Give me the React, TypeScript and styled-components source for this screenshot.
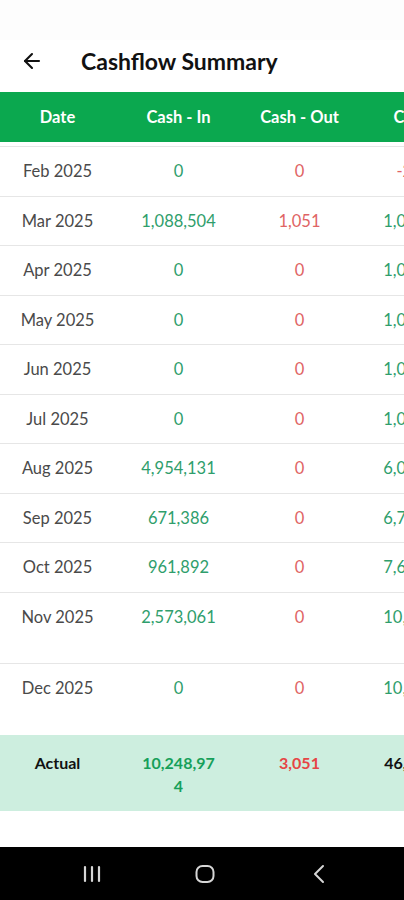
import React from "react";
import styled, { createGlobalStyle } from "styled-components";
import { ArrowLeft } from "lucide-react";

type Tone = "plain" | "in" | "out";

type Row = {
  date: string;
  cashIn: string;
  cashOut: string;
  closing: string;
  closingTone: Tone;
};

const rows: Row[] = [
  { date: "Feb 2025", cashIn: "0", cashOut: "0", closing: "-2,000", closingTone: "out" },
  { date: "Mar 2025", cashIn: "1,088,504", cashOut: "1,051", closing: "1,085,453", closingTone: "in" },
  { date: "Apr 2025", cashIn: "0", cashOut: "0", closing: "1,085,453", closingTone: "in" },
  { date: "May 2025", cashIn: "0", cashOut: "0", closing: "1,085,453", closingTone: "in" },
  { date: "Jun 2025", cashIn: "0", cashOut: "0", closing: "1,085,453", closingTone: "in" },
  { date: "Jul 2025", cashIn: "0", cashOut: "0", closing: "1,085,453", closingTone: "in" },
  { date: "Aug 2025", cashIn: "4,954,131", cashOut: "0", closing: "6,039,584", closingTone: "in" },
  { date: "Sep 2025", cashIn: "671,386", cashOut: "0", closing: "6,710,970", closingTone: "in" },
  { date: "Oct 2025", cashIn: "961,892", cashOut: "0", closing: "7,672,862", closingTone: "in" },
  { date: "Nov 2025", cashIn: "2,573,061", cashOut: "0", closing: "10,245,923", closingTone: "in" },
  { date: "Dec 2025", cashIn: "0", cashOut: "0", closing: "10,245,923", closingTone: "in" },
];

const GlobalStyle = createGlobalStyle`
  body {
    margin: 0;
    background: #ffffff;
    font-family: "Lato", "Noto Sans", sans-serif;
  }
`;

const Screen = styled.div`
  width: 404px;
  height: 900px;
  display: flex;
  flex-direction: column;
  background: #ffffff;
  overflow: hidden;
`;

const StatusBar = styled.div`
  height: 40px;
  background: #fdfdfd;
`;

const AppBar = styled.div`
  height: 52px;
  box-sizing: border-box;
  padding: 0 0 10px 20px;
  display: flex;
  align-items: center;
  gap: 37px;
  color: #111111;
`;

const Title = styled.h1`
  margin: 0;
  font-size: 23px;
  line-height: 26px;
  font-weight: 700;
`;

const TableArea = styled.div`
  flex: 1;
  overflow: hidden;
`;

const Table = styled.div`
  width: 484px;
  margin-left: -3px;
`;

const HeaderRow = styled.div`
  height: 50px;
  display: grid;
  grid-template-columns: repeat(4, 121px);
  align-items: center;
  background: #0ba84f;
  margin-bottom: 4px;
`;

const HeadCell = styled.div`
  text-align: center;
  color: #ffffff;
  font-size: 16.5px;
  font-weight: 700;
  white-space: nowrap;
`;

const Body = styled.div`
  border-top: 1px solid #e6e6e6;
`;

const DataRow = styled.div<{ $last?: boolean }>`
  display: grid;
  grid-template-columns: repeat(4, 121px);
  align-items: start;
  border-bottom: 1px solid ${({ $last }) => ($last ? "transparent" : "#e6e6e6")};
`;

const toneColor: Record<Tone, string> = {
  plain: "#4a4a4a",
  in: "#2f9e6c",
  out: "#e06464",
};

const Cell = styled.div<{ $tone: Tone }>`
  padding: 14px 21px 13px;
  line-height: 21.5px;
  text-align: center;
  font-size: 16.5px;
  color: ${({ $tone }) => toneColor[$tone]};
  overflow-wrap: anywhere;
`;

const TotalRow = styled.div`
  display: grid;
  grid-template-columns: repeat(4, 121px);
  align-items: start;
  background: #cdeedf;
  padding: 16px 0 14px;
`;

const totalColor: Record<Tone, string> = {
  plain: "#111111",
  in: "#16a05a",
  out: "#e64545",
};

const TotalCell = styled.div<{ $tone: Tone }>`
  padding: 0 21px;
  text-align: center;
  font-size: 16px;
  font-weight: 700;
  line-height: 23px;
  overflow-wrap: anywhere;
  color: ${({ $tone }) => totalColor[$tone]};
`;

const NavBar = styled.div`
  height: 53px;
  background: #000000;
  display: grid;
  grid-template-columns: repeat(3, 113.5px);
  justify-content: center;
  align-items: center;
  justify-items: center;
  padding-left: 6px;
`;

const NavIcon = styled.svg`
  display: block;
  color: #d6d6d6;
`;

export default function App() {
  return (
    <>
      <GlobalStyle />
      <Screen>
        <StatusBar />
        <AppBar>
          <ArrowLeft size={24} strokeWidth={2.1} />
          <Title>Cashflow Summary</Title>
        </AppBar>
        <TableArea>
          <Table>
            <HeaderRow>
              <HeadCell>Date</HeadCell>
              <HeadCell>Cash - In</HeadCell>
              <HeadCell>Cash - Out</HeadCell>
              <HeadCell>Closing</HeadCell>
            </HeaderRow>
            <Body>
              {rows.map((r, i) => (
                <DataRow key={r.date} $last={i === rows.length - 1}>
                  <Cell $tone="plain">{r.date}</Cell>
                  <Cell $tone="in">{r.cashIn}</Cell>
                  <Cell $tone="out">{r.cashOut}</Cell>
                  <Cell $tone={r.closingTone}>{r.closing}</Cell>
                </DataRow>
              ))}
            </Body>
            <TotalRow>
              <TotalCell $tone="plain">Actual</TotalCell>
              <TotalCell $tone="in">10,248,974</TotalCell>
              <TotalCell $tone="out">3,051</TotalCell>
              <TotalCell $tone="plain">46,115,082</TotalCell>
            </TotalRow>
          </Table>
        </TableArea>
        <NavBar>
          <NavIcon width="20" height="18" viewBox="0 0 20 18">
            <g stroke="currentColor" strokeWidth="2.2" strokeLinecap="round">
              <line x1="3" y1="2" x2="3" y2="16" />
              <line x1="10" y1="2" x2="10" y2="16" />
              <line x1="17" y1="2" x2="17" y2="16" />
            </g>
          </NavIcon>
          <NavIcon width="20" height="20" viewBox="0 0 20 20">
            <rect x="1.5" y="2" width="17" height="16" rx="6" fill="none" stroke="currentColor" strokeWidth="2" />
          </NavIcon>
          <NavIcon width="14" height="20" viewBox="0 0 14 20">
            <polyline points="11,2 3,10 11,18" fill="none" stroke="currentColor" strokeWidth="2" strokeLinecap="round" strokeLinejoin="round" />
          </NavIcon>
        </NavBar>
      </Screen>
    </>
  );
}
